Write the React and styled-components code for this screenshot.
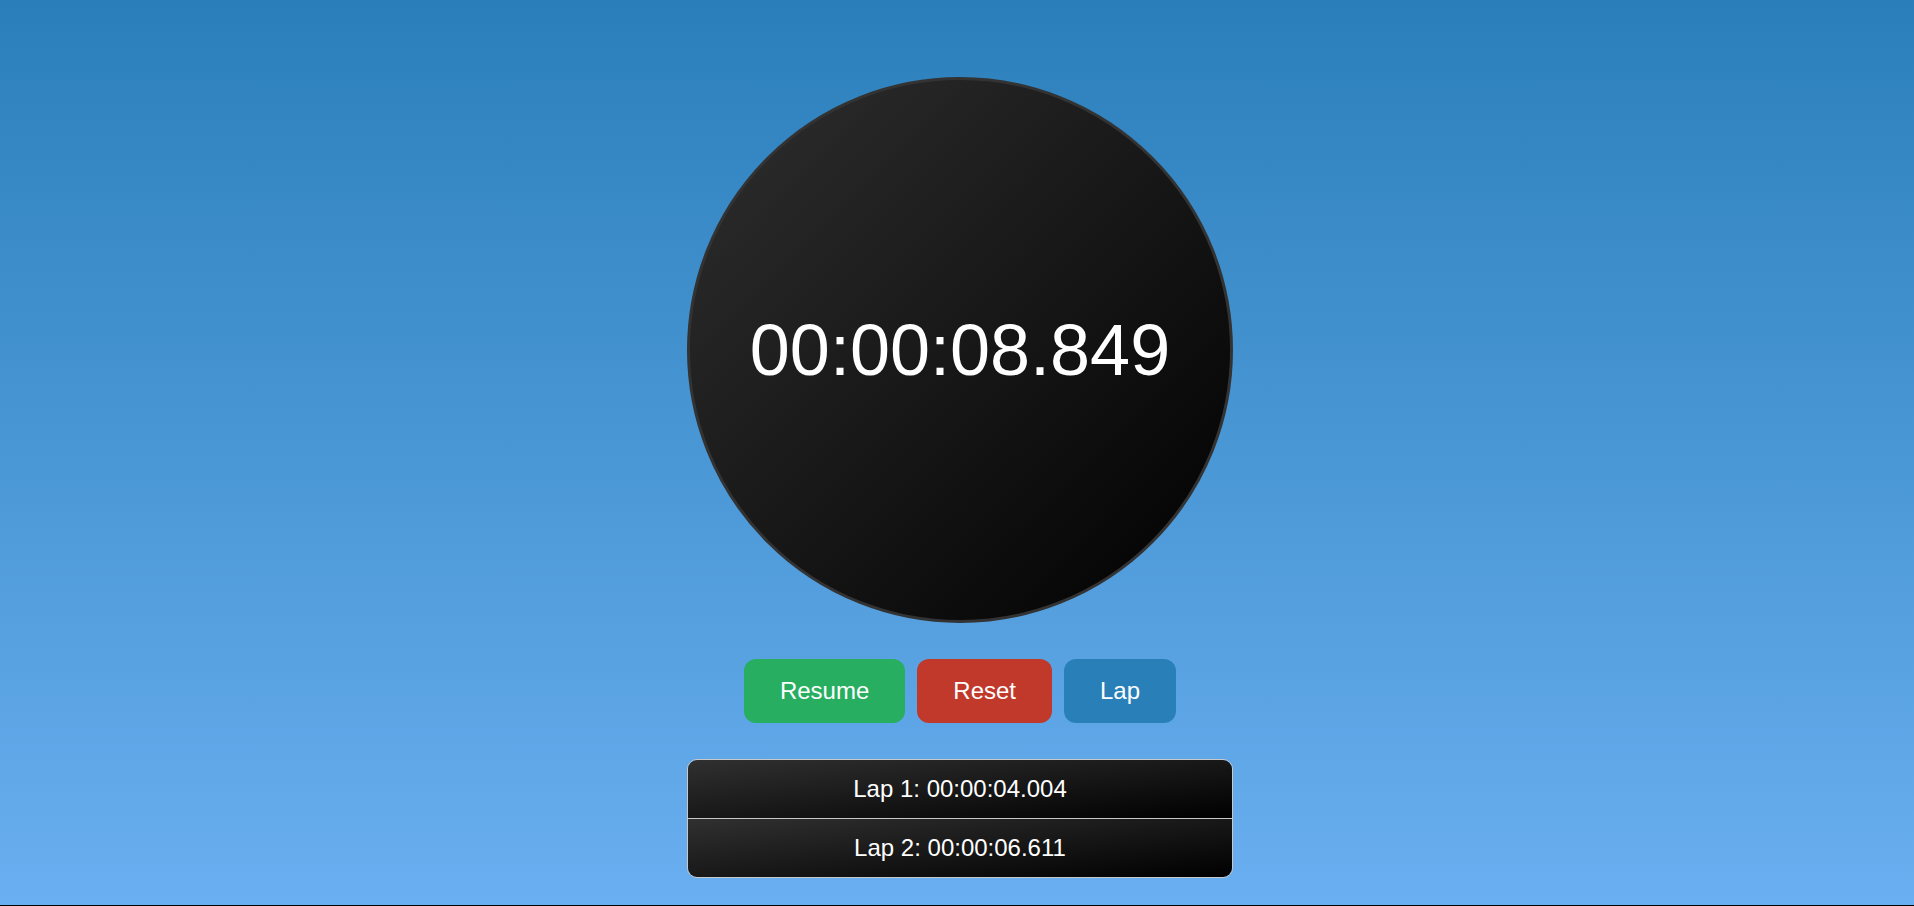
import React from "react";
import styled, { createGlobalStyle } from "styled-components";

const GlobalStyle = createGlobalStyle`
  html, body {
    margin: 0;
    padding: 0;
  }

  body {
    font-family: "Liberation Sans", Arial, sans-serif;
    background: #000000;
  }
`;

const Page = styled.div`
  height: 905px;
  box-sizing: border-box;
  background: linear-gradient(to bottom, #2a7fba, #6aaff1);
  display: flex;
  flex-direction: column;
  align-items: center;
  padding-top: 77px;
  padding-left: 6px;
`;

const Dial = styled.div`
  width: 540px;
  height: 540px;
  border-radius: 50%;
  border: 3px solid #333333;
  background: linear-gradient(to bottom right, #2f2f2f, #000000);
  display: flex;
  justify-content: center;
  align-items: center;
`;

const Time = styled.span`
  color: #ffffff;
  font-size: 72px;
  line-height: 1;
`;

const Controls = styled.div`
  display: flex;
  gap: 12px;
  margin-top: 36px;
`;

const Button = styled.button`
  background: ${props => props.color};
  color: #ffffff;
  border: none;
  border-radius: 12px;
  font-family: "Liberation Sans", Arial, sans-serif;
  font-size: 24px;
  padding: 0 36px;
  height: 64px;
  cursor: pointer;
`;

const LapList = styled.ul`
  list-style: none;
  margin: 36px 0 0;
  padding: 0;
  width: 546px;
  box-sizing: border-box;
  border: 1px solid #c8c8c8;
  border-radius: 10px;
  overflow: hidden;
`;

const LapItem = styled.li`
  background: linear-gradient(to bottom right, #303030, #000000);
  color: #ffffff;
  font-size: 24px;
  text-align: center;
  height: 58px;
  line-height: 58px;

  & + & {
    border-top: 1px solid #c8c8c8;
  }
`;

const laps = ["00:00:04.004", "00:00:06.611"];

export default function App() {
  return (
    <>
      <GlobalStyle />
      <Page>
        <Dial>
          <Time>00:00:08.849</Time>
        </Dial>
        <Controls>
          <Button color="#27ae60">Resume</Button>
          <Button color="#c0392b">Reset</Button>
          <Button color="#2980b9">Lap</Button>
        </Controls>
        <LapList>
          {laps.map((lap, i) => (
            <LapItem key={lap}>
              Lap {i + 1}: {lap}
            </LapItem>
          ))}
        </LapList>
      </Page>
    </>
  );
}
